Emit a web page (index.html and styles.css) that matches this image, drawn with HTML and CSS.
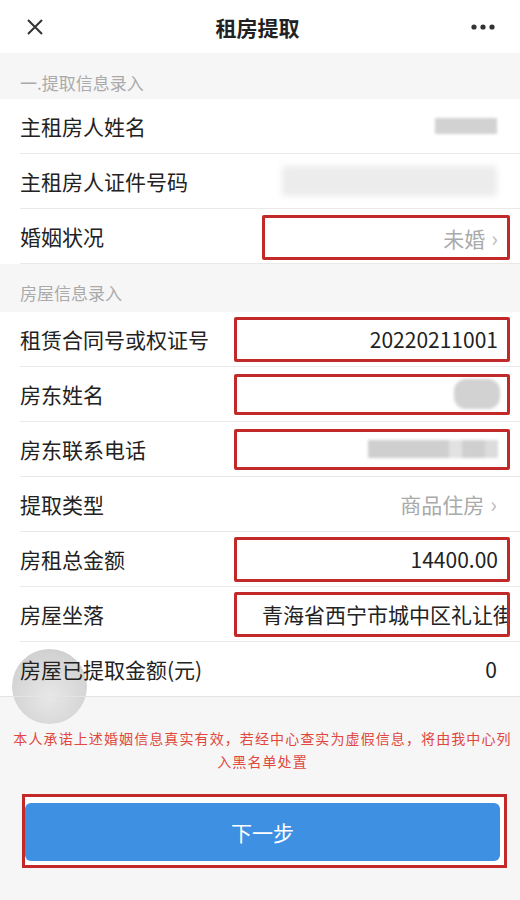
FILE: index.html
```html
<!DOCTYPE html>
<html lang="zh-CN">
<head>
  <meta charset="UTF-8" />
  <meta name="viewport" content="width=device-width, initial-scale=1.0"/>
  <title>租房提取</title>
  <link rel="stylesheet" href="styles.css">
</head>
<body>

  <div class="topbar">
    <svg class="topbar__close" width="20" height="20" viewBox="0 0 20 20">
      <path d="M3 3 L17 17 M17 3 L3 17" stroke="#333" stroke-width="2" fill="none"/>
    </svg>
    <div class="topbar__title">租房提取</div>
    <svg class="topbar__more" width="26" height="8" viewBox="0 0 26 8">
      <circle cx="4" cy="4" r="2.6" fill="#333"/>
      <circle cx="13" cy="4" r="2.6" fill="#333"/>
      <circle cx="22" cy="4" r="2.6" fill="#333"/>
    </svg>
  </div>

  <div class="section-title">一.提取信息录入</div>
  <div class="group">
    <div class="row">
      <span class="label">主租房人姓名</span>
      <span class="value"><span class="blur blur--name"></span></span>
    </div>
    <div class="row">
      <span class="label">主租房人证件号码</span>
      <span class="value"><span class="blur blur--id"></span></span>
    </div>
    <div class="row">
      <span class="label">婚姻状况</span>
      <span class="mark mark--short"><span class="muted">未婚</span><span class="arrow">›</span></span>
    </div>
  </div>

  <div class="section-title section-title--second">房屋信息录入</div>
  <div class="group">
    <div class="row">
      <span class="label">租赁合同号或权证号</span>
      <span class="mark">20220211001</span>
    </div>
    <div class="row">
      <span class="label">房东姓名</span>
      <span class="mark mark--thin"><span class="blur blur--landlord"></span></span>
    </div>
    <div class="row">
      <span class="label">房东联系电话</span>
      <span class="mark mark--thin"><span class="blur blur--phone"></span></span>
    </div>
    <div class="row">
      <span class="label">提取类型</span>
      <span class="value"><span class="muted">商品住房</span><span class="arrow">›</span></span>
    </div>
    <div class="row">
      <span class="label">房租总金额</span>
      <span class="mark">14400.00</span>
    </div>
    <div class="row">
      <span class="label">房屋坐落</span>
      <span class="mark mark--address">青海省西宁市城中区礼让街</span>
    </div>
    <div class="row row--last">
      <span class="label">房屋已提取金额(元)</span>
      <span class="value">0</span>
    </div>
    <div class="float-ball"></div>
  </div>

  <div class="footer">
    <p class="notice">本人承诺上述婚姻信息真实有效，若经中心查实为虚假信息，将由我中心列入黑名单处置</p>
    <div class="submit-box">
      <button class="submit">下一步</button>
    </div>
  </div>

</body>
</html>
```

FILE: styles.css
```css
body {
  margin: 0;
  font-family: "Noto Sans CJK SC", "Noto Sans", sans-serif;
  background: #f6f6f6;
  color: #222;
  width: 520px;
  height: 900px;
  overflow: hidden;
}

.topbar {
  height: 53px;
  background: #fff;
  display: flex;
  align-items: center;
  padding: 0 24px 0 25px;
}

.topbar__close {
  flex: none;
}

.topbar__title {
  flex: 1;
  text-align: center;
  font-size: 21px;
  font-weight: bold;
  color: #222;
}

.topbar__more {
  flex: none;
}

.section-title {
  height: 46px;
  box-sizing: border-box;
  padding: 18px 0 0 20px;
  font-size: 17px;
  line-height: 24px;
  color: #aaa;
}

.section-title--second {
  height: 48px;
  padding-top: 17px;
}

.group {
  background: #fff;
  position: relative;
}

.row {
  position: relative;
  z-index: 1;
  height: 55px;
  box-sizing: border-box;
  margin-left: 20px;
  padding-right: 10px;
  display: flex;
  align-items: center;
  border-bottom: 1px solid #e9e9e9;
}

.row--last {
  margin-left: 0;
  padding-left: 20px;
  border-bottom-color: #e4e4e4;
}

.label {
  font-size: 21px;
  color: #222;
  white-space: nowrap;
}

.value {
  margin-left: auto;
  padding-right: 13px;
  font-size: 21px;
  display: flex;
  align-items: center;
  color: #222;
}

.mark {
  margin-left: auto;
  width: 276px;
  height: 45px;
  box-sizing: border-box;
  border: 3px solid #c22a2a;
  border-radius: 2px;
  padding: 0 9px 0 6px;
  display: flex;
  align-items: center;
  justify-content: flex-end;
  font-size: 21px;
  color: #222;
  overflow: hidden;
  white-space: nowrap;
}

.mark--short {
  width: 248px;
  margin-top: 3px;
}

.mark--thin {
  height: 41px;
}

.mark--address {
  justify-content: flex-start;
  padding-left: 25px;
}

.muted {
  color: #aaa;
}

.arrow {
  color: #bbb;
  font-size: 22px;
  margin-left: 6px;
  line-height: 1;
  position: relative;
  top: -1px;
}

.blur {
  display: inline-block;
  background: #d2d2d2;
  filter: blur(1.5px);
}

.blur--name {
  width: 62px;
  height: 16px;
}

.blur--id {
  width: 215px;
  height: 30px;
  background: #ececec;
  filter: blur(3px);
}

.blur--landlord {
  width: 46px;
  height: 30px;
  border-radius: 12px;
  margin-right: -2px;
}

.blur--phone {
  width: 130px;
  height: 18px;
  background: linear-gradient(to right, #cfcfcf 0 62%, #e2e2e2 62% 72%, #cfcfcf 72% 90%, #dcdcdc 90%);
}

.float-ball {
  position: absolute;
  z-index: 0;
  left: 12px;
  bottom: -27px;
  width: 75px;
  height: 75px;
  border-radius: 50%;
  background: radial-gradient(circle at 50% 65%, rgba(228,228,228,0.85), rgba(192,192,192,0.85));
}

.footer {
  padding: 30px 13px 0 22px;
}

.notice {
  width: 505px;
  margin: 0 0 0 -12px;
  font-size: 14px;
  letter-spacing: 1.1px;
  line-height: 23px;
  color: #e0483e;
  text-align: center;
}

.submit-box {
  margin-top: 21px;
  border: 3px solid #c22a2a;
  padding: 6px 4px 4px 0;
  background: #fff;
}

.submit {
  display: block;
  width: 100%;
  height: 58px;
  border: none;
  border-radius: 6px;
  background: #3e90e2;
  color: #fff;
  font-family: inherit;
  font-size: 21px;
}
```
